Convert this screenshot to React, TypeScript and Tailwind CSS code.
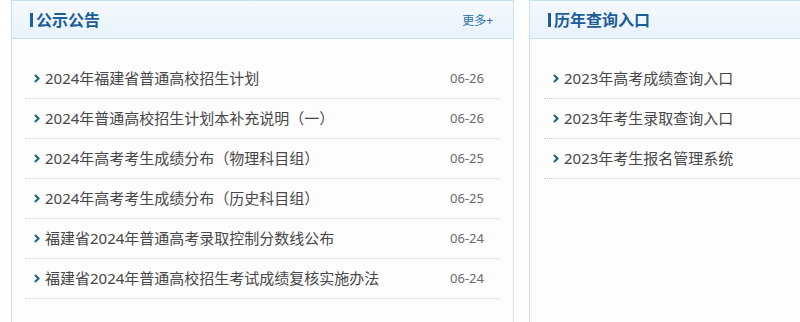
import React from 'react';

const notices = [
  { title: '2024年福建省普通高校招生计划', date: '06-26' },
  { title: '2024年普通高校招生计划本补充说明（一）', date: '06-26' },
  { title: '2024年高考考生成绩分布（物理科目组）', date: '06-25' },
  { title: '2024年高考考生成绩分布（历史科目组）', date: '06-25' },
  { title: '福建省2024年普通高考录取控制分数线公布', date: '06-24' },
  { title: '福建省2024年普通高校招生考试成绩复核实施办法', date: '06-24' },
];

const entries = ['2023年高考成绩查询入口', '2023年考生录取查询入口', '2023年考生报名管理系统'];

function Chevron() {
  return (
    <svg width="6" height="9" viewBox="0 0 6 9" className="shrink-0">
      <path d="M1 1 L4.5 4.5 L1 8" fill="none" stroke="#1d6584" strokeWidth="2.2" />
    </svg>
  );
}

function PanelHeader({ title, more }: { title: string; more?: boolean }) {
  return (
    <div className="h-[38px] flex items-center justify-between border-b border-[#c9dff3] bg-gradient-to-b from-[#f4f9fe] to-[#e9f3fc] pl-[18px] pr-[20px]">
      <div className="flex items-center gap-[3px]">
        <span className="w-[3px] h-[14px] bg-[#1b5e9e]" />
        <span className="text-[16px] font-bold text-[#1b5e9e] leading-none">{title}</span>
      </div>
      {more && <span className="text-[12px] text-[#2f6fae] mt-[2px]">更多+</span>}
    </div>
  );
}

export default function App() {
  return (
    <div
      className="w-[800px] h-[322px] overflow-hidden bg-white flex gap-[15px] pl-[11px]"
      style={{ fontFamily: '"Noto Sans", "Noto Sans CJK SC", sans-serif' }}
    >
      <div className="w-[503px] h-[360px] shrink-0 border border-[#c9dff3] bg-[#fdfdfd]">
        <PanelHeader title="公示公告" more />
        <ul className="pt-[20px] ml-[13px] mr-[14px]">
          {notices.map((n) => (
            <li key={n.title} className="h-10 flex items-center justify-between border-b border-dotted border-[#cfcfcf] pl-[9px] pr-[15px]">
              <div className="flex items-center gap-[5px]">
                <Chevron />
                <span className="text-[15px] text-[#474747]">{n.title}</span>
              </div>
              <span className="text-[13px] text-[#6a6a6a]">{n.date}</span>
            </li>
          ))}
        </ul>
      </div>
      <div className="flex-1 h-[360px] border border-[#c9dff3] border-r-0 bg-[#fdfdfd]">
        <PanelHeader title="历年查询入口" />
        <ul className="pt-[20px] ml-[14px]">
          {entries.map((e) => (
            <li key={e} className="h-10 flex items-center gap-[5px] border-b border-dotted border-[#cfcfcf] pl-[9px]">
              <Chevron />
              <span className="text-[15px] text-[#474747]">{e}</span>
            </li>
          ))}
        </ul>
      </div>
    </div>
  );
}
